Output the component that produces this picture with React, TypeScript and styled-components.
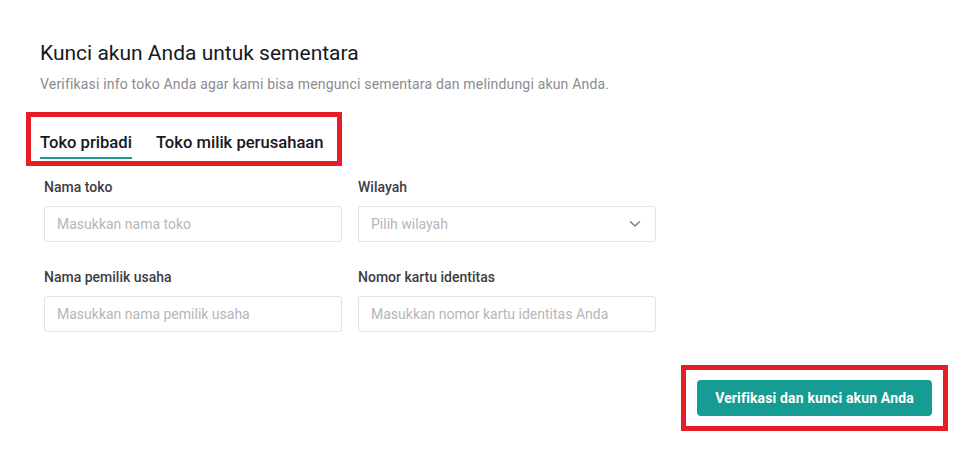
import React, { useState } from "react";
import styled, { createGlobalStyle } from "styled-components";

const Global = createGlobalStyle`
  html, body { margin: 0; padding: 0; background: #fff; }
  body { font-family: Roboto, "Liberation Sans", Arial, sans-serif; -webkit-font-smoothing: antialiased; }
  * { box-sizing: border-box; }
`;

const Page = styled.div`
  width: 975px;
  height: 453px;
  padding: 40px 0 0 40px;
  display: flex;
  flex-direction: column;
`;

const Title = styled.h1`
  margin: 0;
  font-size: 21px;
  line-height: 26px;
  font-weight: 400;
  color: #161823;
`;

const Subtitle = styled.p`
  margin: 8px 0 0;
  font-size: 14px;
  line-height: 20px;
  letter-spacing: 0.18px;
  color: #8a8b91;
`;

const Highlight = styled.div`
  border: 5px solid #e41e26;
`;

const TabsBox = styled(Highlight)`
  margin: 18px 0 0 -14px;
  width: 316px;
  height: 54px;
  padding: 6px 0 0 9px;
  display: flex;
  gap: 24px;
`;

const Tab = styled.button<{ $active?: boolean }>`
  border: none;
  background: none;
  padding: 6px 0 0;
  height: 36px;
  font-family: inherit;
  font-size: 16.6px;
  font-weight: 500;
  color: #161823;
  cursor: pointer;
  border-bottom: 2px solid ${(p) => (p.$active ? "#1b9b93" : "transparent")};
  line-height: 20px;
  align-self: flex-start;
`;

const FormGrid = styled.div`
  margin: 12px 0 0 4px;
  display: grid;
  grid-template-columns: 298px 298px;
  column-gap: 16px;
  row-gap: 26px;
`;

const Field = styled.div`
  display: flex;
  flex-direction: column;
`;

const Label = styled.label`
  font-size: 14px;
  line-height: 18px;
  font-weight: 500;
  color: #3d3d45;
  margin-bottom: 10px;
`;

const Input = styled.input`
  width: 100%;
  height: 36px;
  border: 1px solid #e3e3e5;
  border-radius: 3px;
  padding: 0 12px;
  font-family: inherit;
  font-size: 14px;
  color: #161823;
  outline: none;
  &::placeholder { color: #b5b6ba; }
`;

const SelectBox = styled.div`
  height: 36px;
  border: 1px solid #e3e3e5;
  border-radius: 3px;
  padding: 0 14px 0 12px;
  display: flex;
  align-items: center;
  justify-content: space-between;
  font-size: 14px;
  color: #b5b6ba;
  cursor: pointer;
`;

const Footer = styled.div`
  margin-top: 33px;
  padding-right: 27px;
  display: flex;
  justify-content: flex-end;
`;

const ButtonBox = styled(Highlight)`
  padding: 10px 11px;
`;

const PrimaryButton = styled.button`
  width: 235px;
  height: 36px;
  border: none;
  border-radius: 4px;
  background: #179c93;
  color: #fff;
  font-family: inherit;
  font-size: 14px;
  font-weight: 700;
  letter-spacing: 0.15px;
  cursor: pointer;
`;

const Chevron = () => (
  <svg width="12" height="8" viewBox="0 0 12 8" fill="none">
    <path d="M1.5 1.8 L6 6 L10.5 1.8" stroke="#7a7b80" strokeWidth="1.4" strokeLinecap="round" strokeLinejoin="round" />
  </svg>
);

export default function App() {
  const [tab, setTab] = useState(0);
  return (
    <>
      <Global />
      <Page>
        <Title>Kunci akun Anda untuk sementara</Title>
        <Subtitle>Verifikasi info toko Anda agar kami bisa mengunci sementara dan melindungi akun Anda.</Subtitle>
        <TabsBox>
          <Tab $active={tab === 0} onClick={() => setTab(0)}>Toko pribadi</Tab>
          <Tab $active={tab === 1} onClick={() => setTab(1)}>Toko milik perusahaan</Tab>
        </TabsBox>
        <FormGrid>
          <Field>
            <Label>Nama toko</Label>
            <Input placeholder="Masukkan nama toko" />
          </Field>
          <Field>
            <Label>Wilayah</Label>
            <SelectBox>
              <span>Pilih wilayah</span>
              <Chevron />
            </SelectBox>
          </Field>
          <Field>
            <Label>Nama pemilik usaha</Label>
            <Input placeholder="Masukkan nama pemilik usaha" />
          </Field>
          <Field>
            <Label>Nomor kartu identitas</Label>
            <Input placeholder="Masukkan nomor kartu identitas Anda" />
          </Field>
        </FormGrid>
        <Footer>
          <ButtonBox>
            <PrimaryButton>Verifikasi dan kunci akun Anda</PrimaryButton>
          </ButtonBox>
        </Footer>
      </Page>
    </>
  );
}
